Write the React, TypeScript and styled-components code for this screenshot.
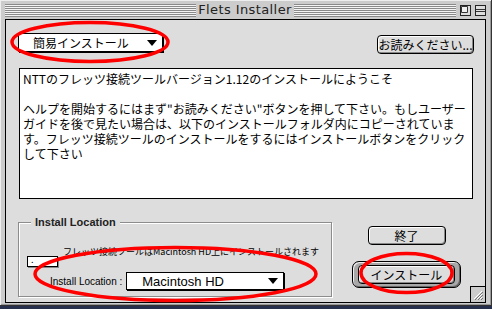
import { FC } from 'react';
import styled, { createGlobalStyle } from 'styled-components';

const GlobalStyle = createGlobalStyle`
  html, body {
    margin: 0;
    padding: 0;
    background: #26304c;
  }
  body {
    width: 492px;
    height: 309px;
    overflow: hidden;
    font-family: "Noto Sans CJK JP", "Liberation Sans", sans-serif;
  }
`

const Window = styled.div`
  position: relative;
  width: 492px;
  height: 306px;
  box-sizing: border-box;
  background: #cccccc;
  border-right: 1px solid #333333;
  border-bottom: 1px solid #333333;
  box-shadow: inset 1px 1px 0 #eeeeee, inset -1px -1px 0 #999999;
  padding: 0 5px 2px 5px;
  display: flex;
  flex-direction: column;
`

const TitleBar = styled.div`
  height: 19px;
  display: flex;
  align-items: center;
  flex-shrink: 0;
`

const Stripes = styled.div<{ $width?: number }>`
  height: 13px;
  margin-top: 1px;
  flex: ${p => (p.$width ? `0 0 ${p.$width}px` : '1')};
  background: repeating-linear-gradient(to bottom, #8a8a8a 0 1px, #f4f4f4 1px 2px);
`

const TitleText = styled.div`
  width: 98px;
  text-align: center;
  font-family: "DejaVu Sans", sans-serif;
  font-size: 13px;
  color: #222222;
  letter-spacing: 0.4px;
`

const TitleWidget = styled.div`
  width: 11px;
  height: 11px;
  margin-left: 4px;
  margin-top: 1px;
  display: flex;
`

const Content = styled.div`
  position: relative;
  flex: 1;
  border: 1px solid #000000;
  background: #dddddd;
  padding: 13px 11px 0 12px;
  display: flex;
  flex-direction: column;
`

const TopRow = styled.div`
  display: flex;
  justify-content: space-between;
  align-items: flex-start;
`

const Popup = styled.div<{ $width: number; $height: number }>`
  width: ${p => p.$width}px;
  height: ${p => p.$height}px;
  box-sizing: border-box;
  border: 1px solid #000000;
  background: #ffffff;
  box-shadow: 1px 1px 0 #000000;
  display: flex;
  align-items: center;
  justify-content: space-between;
`

const PopupText = styled.span<{ $pad: number; $latin?: boolean }>`
  padding-left: ${p => p.$pad}px;
  font-family: ${p => (p.$latin ? '"Liberation Sans", sans-serif' : '"Noto Sans CJK JP", sans-serif')};
  font-size: ${p => (p.$latin ? 13 : 12)}px;
  color: #000000;
  white-space: nowrap;
`

const Arrow = styled.span`
  width: 0;
  height: 0;
  margin-right: 5px;
  border-left: 5px solid transparent;
  border-right: 5px solid transparent;
  border-top: 6px solid #000000;
`

const Button = styled.button<{ $width: number }>`
  width: ${p => p.$width}px;
  height: 19px;
  box-sizing: border-box;
  padding: 0;
  border: 1px solid #000000;
  border-radius: 4px;
  background: #dddddd;
  box-shadow: inset 1px 1px 0 #ffffff, inset -1px -1px 0 #888888;
  font-family: "Noto Sans CJK JP", sans-serif;
  font-size: 12px;
  line-height: 16px;
  color: #000000;
  white-space: nowrap;
`

const ReadButton = styled(Button)`
  margin-top: 2px;
`

const TextBox = styled.div`
  margin: 14px 0 0 1px;
  width: 454px;
  height: 131px;
  box-sizing: border-box;
  border: 1px solid #000000;
  background: #ffffff;
  padding: 2px 0 0 3px;
  font-size: 12px;
  line-height: 15px;
  color: #000000;
  white-space: pre;
  overflow: hidden;
`

const BottomRow = styled.div`
  margin-top: 23px;
  display: flex;
  align-items: flex-start;
`

const Group = styled.div`
  width: 314px;
  height: 75px;
  box-sizing: border-box;
  border: 1px solid #8c8c8c;
  box-shadow: 1px 1px 0 #ffffff, inset 1px 1px 0 #ffffff;
  display: flex;
  flex-direction: column;
`

const Legend = styled.div`
  align-self: flex-start;
  margin: -7px 0 0 12px;
  padding: 0 4px;
  height: 13px;
  line-height: 13px;
  background: #dddddd;
  font-family: "Liberation Sans", sans-serif;
  font-weight: bold;
  font-size: 11px;
  color: #222222;
`

const MessageRow = styled.div`
  margin-top: 17px;
  display: flex;
  align-items: flex-start;
`

const SmallField = styled.div`
  margin: 10px 0 0 8px;
  width: 31px;
  height: 11px;
  box-sizing: border-box;
  border: 1px solid #000000;
  background: #ffffff;
  box-shadow: 1px 1px 0 #888888;
  font-size: 9px;
  line-height: 6px;
  padding-left: 3px;
`

const Message = styled.div`
  margin-left: 5px;
  font-size: 9px;
  line-height: 12px;
  color: #000000;
  white-space: nowrap;
`

const LocationRow = styled.div`
  margin-top: 5px;
  display: flex;
  align-items: center;
`

const LocationLabel = styled.div`
  margin-left: 31px;
  margin-right: 4px;
  font-family: "Liberation Sans", sans-serif;
  font-size: 10px;
  color: #000000;
  white-space: nowrap;
`

const RightCol = styled.div`
  margin: 4px 0 0 20px;
  width: 109px;
  display: flex;
  flex-direction: column;
  align-items: center;
  gap: 16px;
`

const DefaultRing = styled.div`
  width: 109px;
  height: 27px;
  box-sizing: border-box;
  border: 1px solid #000000;
  border-radius: 7px;
  background: #a8a8a8;
  box-shadow: inset 1px 1px 0 #eeeeee, inset -1px -1px 0 #666666;
  display: flex;
  align-items: center;
  justify-content: center;
`

const GrowBox = styled.div`
  position: absolute;
  right: 0;
  bottom: 0;
  width: 14px;
  height: 15px;
  border-left: 1px solid #000000;
  border-top: 1px solid #000000;
  background: #cccccc;
  display: flex;
  align-items: center;
  justify-content: center;
`

const Annotations = styled.svg`
  position: absolute;
  left: 0;
  top: 0;
  pointer-events: none;
`

const intro = [
  'NTTのフレッツ接続ツールバージョン1.12のインストールにようこそ',
  '',
  'ヘルプを開始するにはまず"お読みください"ボタンを押して下さい。もしユーザー',
  'ガイドを後で見たい場合は、以下のインストールフォルダ内にコピーされていま',
  'す。フレッツ接続ツールのインストールをするにはインストールボタンをクリック',
  'して下さい',
].join('\n')

const App: FC = () => {
  return (
    <>
      <GlobalStyle />
      <Window>
        <TitleBar>
          <Stripes $width={191} />
          <TitleText>Flets Installer</TitleText>
          <Stripes />
          <TitleWidget>
            <svg width="11" height="11" viewBox="0 0 11 11">
              <rect x="0.5" y="0.5" width="10" height="10" fill="#dddddd" stroke="#222" />
              <path d="M1.5 1.5H7.5V7.5H1.5Z" fill="#eeeeee" stroke="#333" />
            </svg>
          </TitleWidget>
          <TitleWidget>
            <svg width="11" height="11" viewBox="0 0 11 11">
              <rect x="0.5" y="0.5" width="10" height="10" fill="#dddddd" stroke="#222" />
              <path d="M1 4.5H10M1 6.5H10" stroke="#333" />
            </svg>
          </TitleWidget>
        </TitleBar>

        <Content>
          <TopRow>
            <Popup $width={145} $height={19}>
              <PopupText $pad={14}>簡易インストール</PopupText>
              <Arrow />
            </Popup>
            <ReadButton $width={97}>お読みください...</ReadButton>
          </TopRow>

          <TextBox>{intro}</TextBox>

          <BottomRow>
            <Group>
              <Legend>Install Location</Legend>
              <MessageRow>
                <SmallField>.</SmallField>
                <Message>フレッツ接続ツールはMacintosh HD上にインストールされます</Message>
              </MessageRow>
              <LocationRow>
                <LocationLabel>Install Location :</LocationLabel>
                <Popup $width={158} $height={18}>
                  <PopupText $pad={15} $latin>Macintosh HD</PopupText>
                  <Arrow />
                </Popup>
              </LocationRow>
            </Group>

            <RightCol>
              <Button $width={78}>終了</Button>
              <DefaultRing>
                <Button $width={97}>インストール</Button>
              </DefaultRing>
            </RightCol>
          </BottomRow>

          <GrowBox>
            <svg width="12" height="12" viewBox="0 0 12 12">
              <path d="M2 10L10 2M5 10L10 5M8 10L10 8" stroke="#ffffff" strokeWidth="1" />
              <path d="M3 11L11 3M6 11L11 6M9 11L11 9" stroke="#777777" strokeWidth="1" />
            </svg>
          </GrowBox>
        </Content>

        <Annotations width="492" height="309" viewBox="0 0 492 309">
          <ellipse cx="90" cy="42" rx="78" ry="19.5" fill="none" stroke="#ff0000" strokeWidth="3.5" />
          <ellipse cx="175.5" cy="274" rx="140.5" ry="26.5" fill="none" stroke="#ff0000" strokeWidth="3.5" />
          <ellipse cx="406.5" cy="273" rx="45.5" ry="19.5" fill="none" stroke="#ff0000" strokeWidth="3.5" />
        </Annotations>
      </Window>
    </>
  );
}

export default App;
